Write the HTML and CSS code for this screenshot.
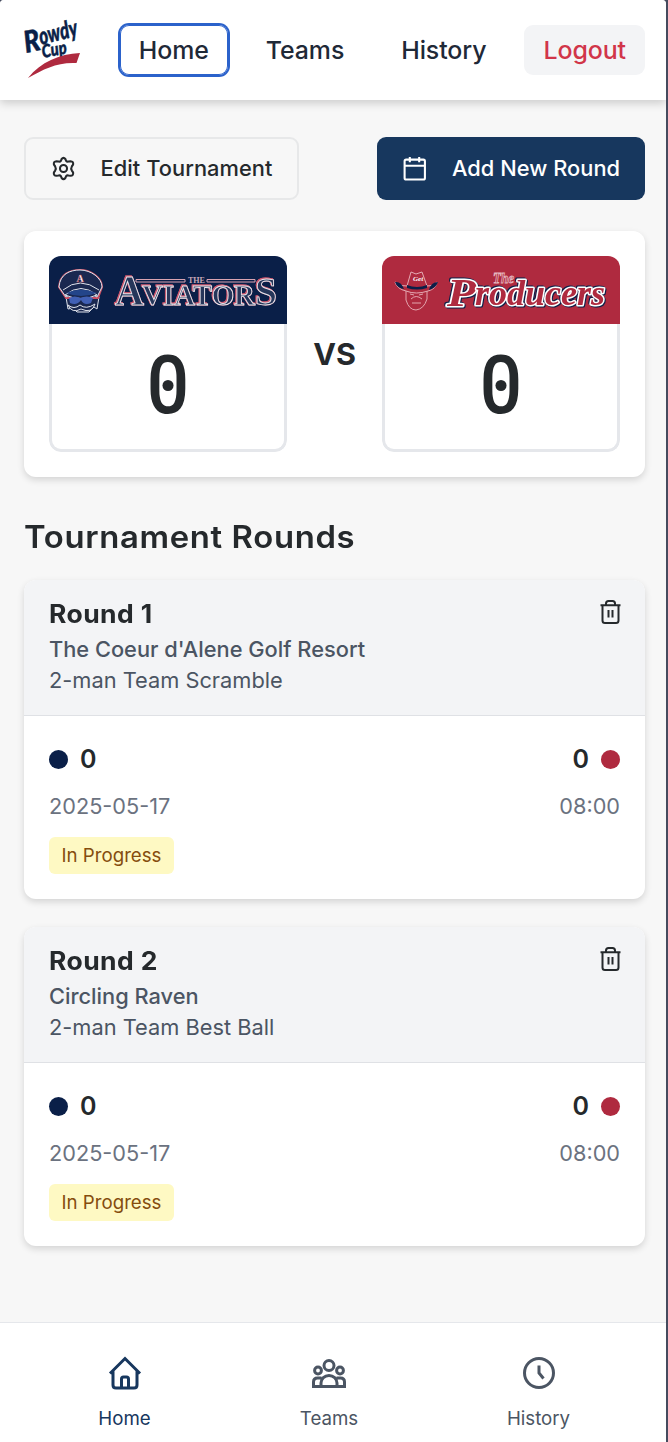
FILE: index.html
```html
<!DOCTYPE html>
<html lang="en">
<head>
<meta charset="utf-8">
<title>Rowdy Cup</title>
<link rel="stylesheet" href="styles.css">
</head>
<body>
<div class="app">
  <header class="topbar">
    <svg class="brand" viewBox="0 0 60 64" aria-label="Rowdy Cup">
      <g class="brand-text">
        <text transform="translate(2 37) rotate(-12)" font-size="30" textLength="16" lengthAdjust="spacingAndGlyphs">R</text>
        <text transform="translate(17 29) rotate(-14)" font-size="24" textLength="39" lengthAdjust="spacingAndGlyphs">owdy</text>
        <text transform="translate(19 42) rotate(-11)" font-size="18" textLength="25" lengthAdjust="spacingAndGlyphs">Cup</text>
      </g>
      <path d="M4 62C17 46 35 38 56 37L52.500 47C33 46 20 53 4 62Z" fill="#af2a3f"/>
    </svg>
    <nav class="nav">
      <a class="nav-item nav-current">Home</a>
      <a class="nav-item">Teams</a>
      <a class="nav-item">History</a>
      <a class="nav-item nav-logout">Logout</a>
    </nav>
  </header>

  <main class="main">
    <div class="actions">
      <button class="btn btn-edit">
        <svg class="icon" viewBox="0 0 24 24"><path d="M10.200 2.900Q12 .7 13.800 2.900L14.500 4.600Q15.300 5.700 16.800 5.300L18.700 5Q21.800 5.300 21.200 8.200L20 10Q18.800 12 20 14L21.200 15.800Q21.800 18.700 18.700 19L16.800 18.700Q15.300 18.300 14.500 19.400L13.800 21.100Q12 23.300 10.200 21.100L9.500 19.400Q8.700 18.300 7.200 18.700L5.300 19Q2.200 18.700 2.800 15.800L4 14Q5.200 12 4 10L2.800 8.200Q2.200 5.300 5.300 5L7.200 5.300Q8.700 5.700 9.500 4.600Z"/><circle cx="12" cy="12" r="3.400"/></svg>
        <span>Edit Tournament</span>
      </button>
      <button class="btn btn-add">
        <svg class="icon" viewBox="0 0 24 24"><rect x="2.500" y="3.500" width="19.500" height="19" rx="1.500"/><path d="M2.500 9.300H22M7.500 1V6M16.500 1V6"/></svg>
        <span>Add New Round</span>
      </button>
    </div>

    <section class="match card">
      <div class="team">
        <div class="team-banner aviators">
          <svg viewBox="0 0 238 69">
            <g fill="#1a2850" stroke="#dfe3ec" stroke-width="1">
              <path d="M17 41L19 53L24 52L28 56L40 56L45 51L48 53L50 41Z"/>
              <path d="M10 31C11 18 21 14 31 14C42 14 53 22 53 31L49 42L17 42Z" stroke="#c84c60" stroke-width="2"/>
              <path d="M10 31C11 18 21 14 31 14C42 14 53 22 53 31L48 41Q32 30 17 41Z"/>
              <path d="M14 34Q31 20 50 34M16 39Q32 26 48 39Q32 46 16 39Z"/>
              <path d="M19 49Q25 54 31 49Q37 54 46 48Q43 58 32 53Q23 58 19 49Z"/>
            </g>
            <path d="M20 42Q26 39 31 42Q38 39 44 42L42 47Q35 50 32 44Q28 50 21 47Z" fill="#4160b5"/>
            <path d="M17 37Q32 30 48 37Q32 43 17 37Z" fill="#23458a"/>
            <text x="31" y="26" text-anchor="middle" font-size="10" font-weight="700" fill="#fff" stroke="#b32d42" stroke-width=".3">A</text>
            <path d="M87 23.500H136V26H87ZM158 23.500H206V26H158Z" fill="#0a1f48" stroke="#d9a3b1" stroke-width="1"/>
            <g class="aviators-word">
              <text x="66" y="49" font-size="42" textLength="29" lengthAdjust="spacingAndGlyphs">A</text>
              <text x="93" y="49" font-size="30" textLength="113" lengthAdjust="spacingAndGlyphs">VIATOR</text>
              <text x="206" y="49" font-size="41" textLength="22" lengthAdjust="spacingAndGlyphs">S</text>
            </g>
            <text x="139" y="27" font-size="8" textLength="17" lengthAdjust="spacingAndGlyphs" fill="#c8a9b8" font-weight="700">THE</text>
          </svg>
        </div>
        <div class="team-score"><span>0</span></div>
      </div>
      <div class="versus">VS</div>
      <div class="team">
        <div class="team-banner producers">
          <svg viewBox="0 0 238 69">
            <path d="M24 34L24 44Q27 54 34 54Q42 53 45 43L45 34M29 43Q34 38 40 43M30 47H39M28 38L32 39M37 39L41 38" fill="none" stroke="#e3a5ae" stroke-width="1"/>
            <path d="M25 30L29 16L34 18L40 16L45 30Q51 31 55 26Q54 33 46 35Q34 39 24 35Q15 33 13 26Q19 31 25 30Z" fill="#af2a3f" stroke="#e5aab3" stroke-width="1"/>
            <path d="M13 26Q19 25 22 33Q15 32 13 26ZM56 26Q49 26 47 34Q54 32 56 26ZM25 29Q35 33 45 29V32Q35 35 25 32Z" fill="#0a1f48"/>
            <text x="31" y="25" font-size="7" fill="#fff" class="script">Get</text>
            <g class="script producers-word">
              <text x="65" y="50" font-size="40" textLength="29" lengthAdjust="spacingAndGlyphs">P</text>
              <text x="93" y="49" font-size="35" textLength="130" lengthAdjust="spacingAndGlyphs">roducers</text>
            </g>
            <text x="111" y="27" font-size="14" textLength="21" lengthAdjust="spacingAndGlyphs" class="script" fill="#af2a3f" stroke="#e5b4be" stroke-width=".8">The</text>
          </svg>
        </div>
        <div class="team-score"><span>0</span></div>
      </div>
    </section>

    <h2 class="section-title">Tournament Rounds</h2>

    <article class="round card">
      <div class="round-head">
        <div>
          <h3 class="round-name">Round 1</h3>
          <p class="course">The Coeur d'Alene Golf Resort</p>
          <p class="format">2-man Team Scramble</p>
        </div>
        <svg class="trash" viewBox="0 0 24 26"><path d="M1.500 6.200H21.500M3.500 6.200V21.500Q3.500 24 6 24H17Q19.500 24 19.500 21.500V6.200M7 6V4.500Q7 2 9.500 2H13.500Q16 2 16 4.500V6M9.500 11V18.500M13.500 11V18.500"/></svg>
      </div>
      <div class="round-body">
        <div class="row points"><span class="point"><i class="dot navy"></i>0</span><span class="point">0<i class="dot red"></i></span></div>
        <div class="row when"><span>2025-05-17</span><span>08:00</span></div>
        <span class="status">In Progress</span>
      </div>
    </article>

    <article class="round card">
      <div class="round-head">
        <div>
          <h3 class="round-name">Round 2</h3>
          <p class="course">Circling Raven</p>
          <p class="format">2-man Team Best Ball</p>
        </div>
        <svg class="trash" viewBox="0 0 24 26"><path d="M1.500 6.200H21.500M3.500 6.200V21.500Q3.500 24 6 24H17Q19.500 24 19.500 21.500V6.200M7 6V4.500Q7 2 9.500 2H13.500Q16 2 16 4.500V6M9.500 11V18.500M13.500 11V18.500"/></svg>
      </div>
      <div class="round-body">
        <div class="row points"><span class="point"><i class="dot navy"></i>0</span><span class="point">0<i class="dot red"></i></span></div>
        <div class="row when"><span>2025-05-17</span><span>08:00</span></div>
        <span class="status">In Progress</span>
      </div>
    </article>
  </main>

  <footer class="tabs">
    <a class="tab tab-active">
      <svg viewBox="0 0 36 36"><path d="M3 18.500L18 3.500L33 18.500M6 16V30Q6 33 9 33H27Q30 33 30 30V16M14.500 33V24Q14.500 22 16.500 22H19.500Q21.500 22 21.500 24V33"/></svg>
      <span>Home</span>
    </a>
    <a class="tab">
      <svg viewBox="0 0 36 36"><circle cx="18" cy="10.500" r="5"/><circle cx="7" cy="15.500" r="3.400"/><circle cx="29" cy="15.500" r="3.400"/><path d="M10 31.500V28A8 7.500 0 0 1 26 28V31.500ZM10 31.500H2.500V27Q2.500 23 6.500 23H10.500M26 31.500H33.500V27Q33.500 23 29.500 23H25.500"/></svg>
      <span>Teams</span>
    </a>
    <a class="tab">
      <svg viewBox="0 0 36 36"><circle cx="18" cy="18" r="14.500"/><path d="M18 10.500V18L22.500 23.500"/></svg>
      <span>History</span>
    </a>
  </footer>
</div>
</body>
</html>
```
FILE: styles.css
```css
* { box-sizing: border-box; }

body {
  margin: 0;
  background: #454b5e;
  font-family: Inter, "Liberation Sans", sans-serif;
  color: #25292c;
}

h2, h3, p { margin: 0; }
svg { display: block; overflow: visible; }

.app {
  width: 666px;
  height: 1442px;
  display: flex;
  flex-direction: column;
  overflow: hidden;
  background: #f7f7f7;
  border-radius: 4px 4px 0 0;
}

.topbar {
  flex: none;
  height: 100px;
  padding: 0 21px 0 24px;
  display: flex;
  align-items: center;
  justify-content: space-between;
  background: #fff;
  box-shadow: 0 3px 9px rgba(0, 0, 0, .18);
}

.brand { width: 60px; height: 64px; margin-top: -4px; }
.brand-text { fill: #0a1f48; stroke: #0a1f48; stroke-width: .5; font-family: Lato, sans-serif; font-style: italic; font-weight: 900; }

.nav { display: flex; gap: 19px; }
.nav-item {
  height: 50px;
  padding: 0 19px;
  border-radius: 9px;
  font-size: 24.900px;
  font-weight: 500;
  line-height: 50px;
  letter-spacing: -.08px;
  color: #1f2937;
}
.nav-current { box-shadow: 0 0 0 2px #2b62cb, inset 0 0 0 1px #2b62cb; }
.nav-logout { background: #f3f4f6; color: #d13549; }

.main { flex: 1; padding: 37px 21px 0 24px; }
.actions { display: flex; justify-content: space-between; }
.btn {
  height: 63px;
  padding: 0 0 1px;
  display: flex;
  align-items: center;
  justify-content: center;
  gap: 25px;
  border: 2px solid #e7e8e9;
  border-radius: 9px;
  background: transparent;
  font: 500 21.800px/30px Inter, sans-serif;
  letter-spacing: .05px;
  color: #25292c;
}
.btn-edit { width: 275px; }
.btn-add { width: 268px; border: 0; background: #17375e; color: #fff; }
.icon { width: 25px; height: 25px; fill: none; stroke: currentColor; stroke-width: 2; }

.card { background: #fff; border-radius: 12px; box-shadow: 0 3px 7px rgba(0, 0, 0, .14); }
.match {
  height: 246px;
  margin-top: 31px;
  padding: 25px;
  display: flex;
  justify-content: space-between;
}
.team {
  width: 238px;
  height: 196px;
  border-radius: 12px;
  overflow: hidden;
  display: flex;
  flex-direction: column;
}
.team-banner { height: 68px; flex: none; }
.team-banner svg { width: 238px; height: 69px; }
.aviators { background: #0a1f48; font-family: "Liberation Serif", serif; }
.producers { background: #af2a3f; }
.aviators-word {
  fill: #26365a;
  stroke: #e6e8ee;
  stroke-width: .9;
  font-weight: 700;
  filter: drop-shadow(.6px .4px 0 #c9556c) drop-shadow(-.6px -.3px 0 #c9556c);
}
.script { font-family: "Liberation Serif", serif; font-style: italic; font-weight: 700; }
.producers-word {
  fill: #af2a3f;
  stroke: #fff;
  stroke-width: 3;
  stroke-linejoin: round;
  paint-order: stroke;
  filter: drop-shadow(1px 1px 0 #0a1f48) drop-shadow(-1px -.5px 0 #0a1f48);
}
.team-score {
  flex: 1;
  display: flex;
  justify-content: center;
  border: 3px solid #e5e7eb;
  border-top: 0;
  border-radius: 0 0 12px 12px;
  font: 500 81px/124px Roboto, sans-serif;
}
.team-score span { position: relative; transform: scaleX(.92); }
.team-score span::after {
  content: "";
  position: absolute;
  left: calc(50% - 6px);
  top: 56px;
  width: 12px;
  height: 11px;
  border-radius: 50%;
  background: #25292c;
}
.versus { height: 196px; line-height: 196px; font-size: 30.500px; font-weight: 700; }

.section-title {
  margin-top: 40px;
  font-size: 31px;
  font-weight: 600;
  line-height: 40px;
  letter-spacing: .600px;
  transform: scaleX(1.06);
  transform-origin: left;
}

.round { height: 319px; margin-top: 23px; overflow: hidden; }
.round + .round { margin-top: 28px; }
.round-head {
  height: 136px;
  padding: 19px 22px 0 25px;
  display: flex;
  justify-content: space-between;
  background: #f3f4f6;
  border-bottom: 1px solid #dfe1e5;
}
.round-name {
  font-size: 25px;
  font-weight: 700;
  line-height: 31px;
  letter-spacing: .400px;
  transform: scaleX(1.06);
  transform-origin: left;
}
.course, .format { font-size: 21.800px; line-height: 31px; color: #4b5563; }
.course { margin-top: 4px; font-weight: 500; }
.trash { width: 24px; height: 26px; fill: none; stroke: #25292c; stroke-width: 2; }
.round-body { padding: 24px 25px; }
.row { display: flex; justify-content: space-between; }
.points { height: 38px; font-size: 25px; font-weight: 600; line-height: 38px; }
.point { display: flex; align-items: center; gap: 12px; }
.dot { width: 19px; height: 19px; border-radius: 50%; }
.navy { background: #0a1f48; }
.red { background: #af2a3f; }
.when { margin-top: 13px; font-size: 21.700px; line-height: 31px; color: #6b7280; }
.status {
  display: inline-block;
  height: 37px;
  margin-top: 15px;
  padding: 0 12.500px;
  border-radius: 6px;
  background: #fef9c3;
  color: #854d0e;
  font-size: 18.700px;
  line-height: 37px;
}

.tabs {
  flex: none;
  height: 120px;
  padding: 32px 0 0 20px;
  display: grid;
  grid-template-columns: 209px 200px 219px;
  background: #fff;
  border-top: 1px solid #e5e7eb;
}
.tab {
  display: flex;
  flex-direction: column;
  align-items: center;
  gap: 13px;
  font-size: 18.700px;
  line-height: 30px;
  color: #4b5563;
}
.tab-active { color: #17375e; }
.tab svg { width: 36px; height: 36px; fill: none; stroke: currentColor; stroke-width: 3; }
```
